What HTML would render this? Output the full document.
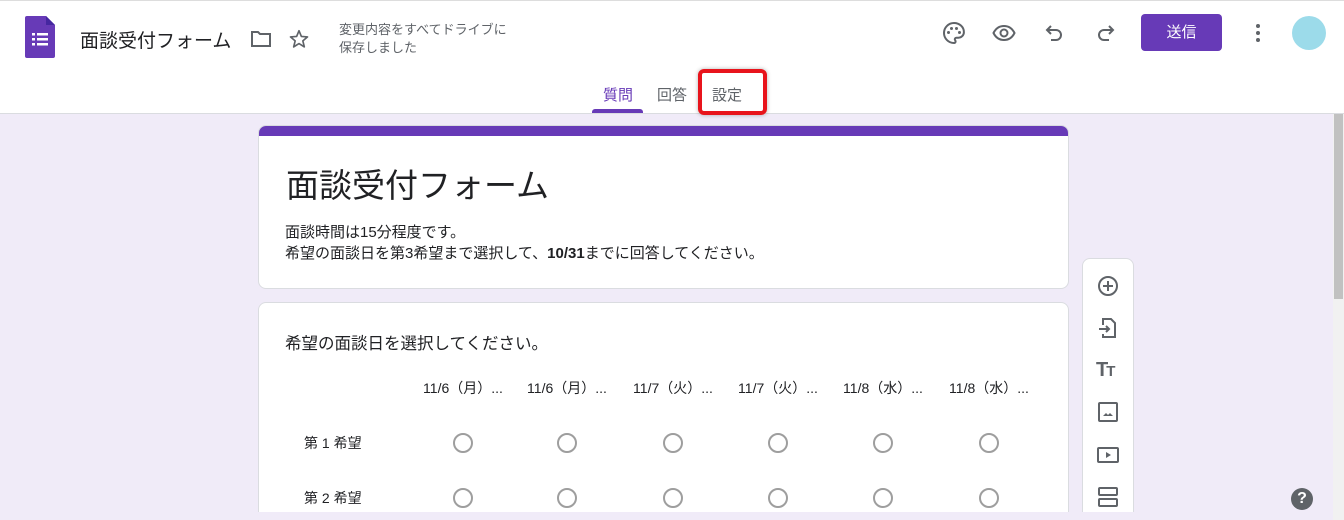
<!DOCTYPE html><html><head><meta charset="utf-8"><style>
*{margin:0;padding:0;box-sizing:border-box}
html,body{width:1344px;height:520px;overflow:hidden}
body{background:#f0ebf8;font-family:"Liberation Sans","Noto Sans CJK JP",sans-serif;position:relative;color:#202124}
.hdr{position:absolute;left:0;top:0;width:1344px;height:114px;background:#fff;border-top:1px solid #ddd;border-bottom:1px solid #dadce0}
.a{position:absolute}
.tab{position:absolute;top:84px;font-size:15px;color:#5f6368}
.card{position:absolute;left:258px;width:811px;background:#fff;border-radius:8px;border:1px solid #dadce0}
.col{position:absolute;top:378px;font-size:14px;color:#202124;width:106px;text-align:center;white-space:nowrap}
.r{position:absolute;width:20px;height:20px;border:2px solid #9e9e9e;border-radius:50%}
svg{position:absolute}
</style></head><body>
<div class="hdr"></div>
<svg style="left:25px;top:16px" width="30" height="42" viewBox="0 0 30 42"><path d="M2 0h19l9 9v31a2 2 0 0 1-2 2H2a2 2 0 0 1-2-2V2a2 2 0 0 1 2-2z" fill="#673ab7"/><path d="M21 0v9h9z" fill="#4527a0"/><g fill="#fff"><rect x="7" y="17" width="3" height="2.5"/><rect x="12" y="17" width="11" height="2.5"/><rect x="7" y="22" width="3" height="2.5"/><rect x="12" y="22" width="11" height="2.5"/><rect x="7" y="27" width="3" height="2.5"/><rect x="12" y="27" width="11" height="2.5"/></g></svg>
<div class="a" style="left:80px;top:26px;font-size:19px;color:#202124">面談受付フォーム</div>
<svg style="left:250px;top:29px" width="22" height="20" viewBox="0 0 22 20"><path d="M2 3h6l2 2h10v12H2z" fill="none" stroke="#5f6368" stroke-width="2"/></svg>
<svg style="left:288px;top:28px" width="22" height="22" viewBox="0 0 24 24"><path d="M12 3l2.6 6.2 6.7.5-5.1 4.4 1.6 6.5L12 17l-5.8 3.6 1.6-6.5-5.1-4.4 6.7-.5z" fill="none" stroke="#5f6368" stroke-width="1.8" stroke-linejoin="round"/></svg>
<div class="a" style="left:339px;top:21px;font-size:13px;color:#5f6368;line-height:18px">変更内容をすべてドライブに<br>保存しました</div>
<svg style="left:942px;top:21px" width="24" height="24" viewBox="0 0 24 24"><path d="M12 2C6.5 2 2 6.5 2 12s4.5 10 10 10c1 0 1.6-.7 1.6-1.6 0-.4-.2-.8-.4-1.1-.3-.3-.4-.6-.4-1 0-.9.7-1.6 1.6-1.6h2c3 0 5.5-2.5 5.5-5.5C22 6 17.5 2 12 2z" fill="none" stroke="#5f6368" stroke-width="2"/><circle cx="6.5" cy="11.5" r="1.5" fill="#5f6368"/><circle cx="9.5" cy="7.5" r="1.5" fill="#5f6368"/><circle cx="14.5" cy="7.5" r="1.5" fill="#5f6368"/><circle cx="17.5" cy="11.5" r="1.5" fill="#5f6368"/></svg>
<svg style="left:992px;top:21px" width="24" height="24" viewBox="0 0 24 24"><path d="M1.5 12C4 7 8 5 12 5s8 2 10.5 7C20 17 16 19 12 19s-8-2-10.5-7z" fill="none" stroke="#5f6368" stroke-width="2"/><circle cx="12" cy="12" r="3.5" fill="none" stroke="#5f6368" stroke-width="2"/></svg>
<svg style="left:1043px;top:21px" width="24" height="24" viewBox="0 0 24 24"><path d="M8 5L4 9l4 4M4 9h9a5 5 0 0 1 0 10H8" fill="none" stroke="#5f6368" stroke-width="2"/></svg>
<svg style="left:1093px;top:21px" width="24" height="24" viewBox="0 0 24 24"><path d="M16 5l4 4-4 4M20 9h-9a5 5 0 0 0 0 10h5" fill="none" stroke="#5f6368" stroke-width="2"/></svg>
<div class="a" style="left:1141px;top:14px;width:81px;height:37px;background:#673ab7;border-radius:4px;color:#fff;font-size:15px;text-align:center;line-height:37px">送信</div>
<svg style="left:1248px;top:21px" width="20" height="24"><circle cx="10" cy="5" r="2" fill="#5f6368"/><circle cx="10" cy="12" r="2" fill="#5f6368"/><circle cx="10" cy="19" r="2" fill="#5f6368"/></svg>
<div class="a" style="left:1292px;top:16px;width:34px;height:34px;border-radius:50%;background:#9cdbea"></div>
<div class="tab" style="left:603px;color:#673ab7">質問</div>
<div class="a" style="left:592px;top:109px;width:51px;height:4px;background:#673ab7;border-radius:3px 3px 0 0"></div>
<div class="tab" style="left:657px">回答</div>
<div class="tab" style="left:712px">設定</div>
<div class="a" style="left:698px;top:69px;width:69px;height:46px;border:4px solid #e8141c;border-radius:6px;box-shadow:0 0 4px rgba(0,0,0,.3)"></div>
<div class="a" style="left:1333px;top:114px;width:11px;height:406px;background:#f1f1f1"></div>
<div class="a" style="left:1334px;top:114px;width:9px;height:185px;background:#c1c1c1"></div>
<div class="card" style="top:125px;height:164px;overflow:hidden"><div style="height:10px;background:#673ab7"></div>
<div class="a" style="left:27px;top:33px;font-size:33px;color:#202124">面談受付フォーム</div>
<div class="a" style="left:26px;top:96px;font-size:15px;line-height:21px">面談時間は15分程度です。<br>希望の面談日を第3希望まで選択して、<b>10/31</b>までに回答してください。</div></div>
<div class="card" style="top:302px;height:230px"></div>
<div class="a" style="left:285px;top:330px;font-size:16.5px">希望の面談日を選択してください。</div>
<div class="col" style="left:410px">11/6（月）...</div><div class="col" style="left:514px">11/6（月）...</div><div class="col" style="left:620px">11/7（火）...</div><div class="col" style="left:725px">11/7（火）...</div><div class="col" style="left:830px">11/8（水）...</div><div class="col" style="left:936px">11/8（水）...</div>
<div class="a" style="left:304px;top:433px;font-size:14px">第 1 希望</div>
<div class="a" style="left:304px;top:488px;font-size:14px">第 2 希望</div>
<div class="r" style="left:453px;top:433px"></div><div class="r" style="left:557px;top:433px"></div><div class="r" style="left:663px;top:433px"></div><div class="r" style="left:768px;top:433px"></div><div class="r" style="left:873px;top:433px"></div><div class="r" style="left:979px;top:433px"></div>
<div class="r" style="left:453px;top:488px"></div><div class="r" style="left:557px;top:488px"></div><div class="r" style="left:663px;top:488px"></div><div class="r" style="left:768px;top:488px"></div><div class="r" style="left:873px;top:488px"></div><div class="r" style="left:979px;top:488px"></div>
<div class="a" style="left:1082px;top:258px;width:52px;height:270px;background:#fff;border-radius:8px;border:1px solid #dadce0"></div>
<svg style="left:1096px;top:274px" width="24" height="24" viewBox="0 0 24 24"><circle cx="12" cy="12" r="9" fill="none" stroke="#5f6368" stroke-width="2"/><path d="M12 7v10M7 12h10" stroke="#5f6368" stroke-width="2"/></svg>
<svg style="left:1096px;top:316px" width="24" height="24" viewBox="0 0 24 24"><path d="M7 9V3h8l4 4v14H7v-3" fill="none" stroke="#5f6368" stroke-width="2"/><path d="M3 13h10M10 10l3 3-3 3" fill="none" stroke="#5f6368" stroke-width="2"/></svg>
<div class="a" style="left:1096px;top:359px;font-size:20px;font-weight:bold;color:#5f6368;letter-spacing:-2px">T<span style="font-size:15px">T</span></div>
<svg style="left:1096px;top:400px" width="24" height="24" viewBox="0 0 24 24"><rect x="3" y="3" width="18" height="18" rx="1" fill="none" stroke="#5f6368" stroke-width="2"/><path d="M7 16l3-3 2 2 2-2 3 3z" fill="#5f6368"/></svg>
<svg style="left:1096px;top:443px" width="24" height="24" viewBox="0 0 24 24"><rect x="2" y="5" width="20" height="14" rx="1" fill="none" stroke="#5f6368" stroke-width="2"/><path d="M10 9v6l5-3z" fill="#5f6368"/></svg>
<svg style="left:1096px;top:485px" width="24" height="24" viewBox="0 0 24 24"><rect x="3" y="3" width="18" height="7" rx="1" fill="none" stroke="#5f6368" stroke-width="2"/><rect x="3" y="14" width="18" height="7" rx="1" fill="none" stroke="#5f6368" stroke-width="2"/></svg>
<div class="a" style="left:0;top:512px;width:1333px;height:8px;background:#f0ebf8"></div>
<div class="a" style="left:1291px;top:488px;width:22px;height:22px;border-radius:50%;background:#5f6368;color:#fff;font-size:16px;font-weight:bold;text-align:center;line-height:22px">?</div>
</body></html>
